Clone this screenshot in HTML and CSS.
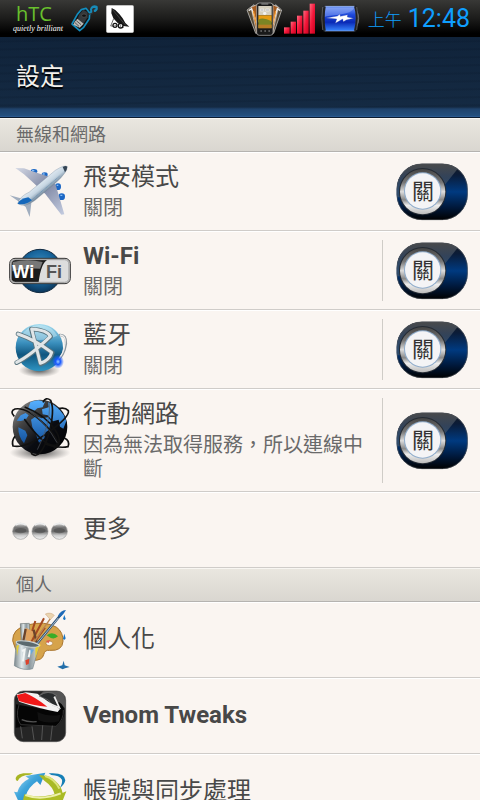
FILE: index.html
```html
<!DOCTYPE html>
<html lang="zh-Hant">
<head>
<meta charset="utf-8">
<meta name="viewport" content="width=device-width, initial-scale=1">
<title>設定</title>
<link rel="stylesheet" href="styles.css">
</head>
<body>
<svg class="defs" aria-hidden="true">
  <defs>
    <linearGradient id="track" x1="0" y1="0" x2="0" y2="1"><stop offset="0" stop-color="#1a1d22"/><stop offset=".2" stop-color="#0b1c38"/><stop offset=".5" stop-color="#003a80"/><stop offset=".78" stop-color="#00183a"/><stop offset="1" stop-color="#000"/></linearGradient>
    <linearGradient id="gloss" x1="0" y1="0" x2="0" y2="1"><stop offset="0" stop-color="#555"/><stop offset=".4" stop-color="#3d4c60"/><stop offset="1" stop-color="#33506f"/></linearGradient>
    <linearGradient id="chrome" x1="0" y1="0" x2="0" y2="1"><stop offset="0" stop-color="#444"/><stop offset=".3" stop-color="#777"/><stop offset=".5" stop-color="#ddd"/><stop offset=".68" stop-color="#888"/><stop offset=".8" stop-color="#eee"/><stop offset="1" stop-color="#bbb"/></linearGradient>
    <clipPath id="pill"><rect x="80" y="39" width="213" height="169" rx="76"/></clipPath>
    <symbol id="switch" viewBox="78 37 216 174">
      <rect x="80" y="39" width="213" height="169" rx="76" fill="url(#track)"/>
      <path clip-path="url(#pill)" d="M80 39H275L195 140H80Z" fill="url(#gloss)" opacity=".8"/>
      <rect x="81" y="40" width="211" height="167" rx="75" fill="none" stroke="#4a5058" stroke-width="2"/>
      <circle cx="158" cy="123" r="71" fill="#252b33"/>
      <circle cx="158" cy="123" r="68" fill="url(#chrome)"/>
      <circle cx="158" cy="121" r="56" fill="#8faccb"/>
      <circle cx="158" cy="121" r="53" fill="#f4f4f6"/>
    </symbol>
    <linearGradient id="body" x1="0" y1="0" x2="1" y2="1"><stop offset=".35" stop-color="#f5f9fc"/><stop offset=".52" stop-color="#c5d5e2"/><stop offset=".65" stop-color="#4d6379"/></linearGradient>
    <linearGradient id="wing" x1="0" y1="0" x2="1" y2="1"><stop offset="0" stop-color="#d5d9e5"/><stop offset=".5" stop-color="#7f88a4"/><stop offset="1" stop-color="#c4cce0"/></linearGradient>
    <radialGradient id="blue" cx=".5" cy=".4" r=".6"><stop offset="0" stop-color="#4196c6"/><stop offset=".6" stop-color="#17649b"/><stop offset="1" stop-color="#0c3558"/></radialGradient>
    <linearGradient id="bt" x1="0" y1="0" x2="0" y2="1"><stop offset="0" stop-color="#a5ddf0"/><stop offset=".4" stop-color="#3a8fbd"/><stop offset=".65" stop-color="#10567f"/><stop offset="1" stop-color="#2f96c4"/></linearGradient>
    <radialGradient id="shade"><stop offset="0" stop-color="#333" stop-opacity=".85"/><stop offset="1" stop-color="#555" stop-opacity="0"/></radialGradient>
    <radialGradient id="spark"><stop offset="0" stop-color="#9cf"/><stop offset=".4" stop-color="#1557ff"/><stop offset="1" stop-color="#1557ff" stop-opacity="0"/></radialGradient>
    <linearGradient id="globe" x1="0" y1="0" x2="1" y2="1"><stop offset="0" stop-color="#aaa"/><stop offset=".3" stop-color="#444"/><stop offset=".6" stop-color="#0a0c12"/><stop offset="1" stop-color="#000"/></linearGradient>
    <linearGradient id="land" x1="0" y1="0" x2="0" y2="1"><stop offset="0" stop-color="#56b0ff"/><stop offset="1" stop-color="#14539f"/></linearGradient>
    <linearGradient id="bead" x1="0" y1="0" x2="0" y2="1"><stop offset="0" stop-color="#ddd"/><stop offset=".25" stop-color="#777"/><stop offset=".5" stop-color="#6c6c6c"/><stop offset=".75" stop-color="#ccc"/><stop offset="1" stop-color="#f5f5f5"/></linearGradient>
    <linearGradient id="metal" x1="0" y1="0" x2="1" y2="0"><stop offset="0" stop-color="#7e898e"/><stop offset=".3" stop-color="#dfe7e9"/><stop offset=".6" stop-color="#89969c"/><stop offset="1" stop-color="#d9dfe0"/></linearGradient>
    <linearGradient id="syncblue" x1="0" y1="0" x2="1" y2="1"><stop offset="0" stop-color="#bfe8fa"/><stop offset=".4" stop-color="#3fa5db"/><stop offset="1" stop-color="#0a6fb5"/></linearGradient>
    <linearGradient id="cell" x1="0" y1="0" x2="0" y2="1"><stop offset="0" stop-color="#7fa2f5"/><stop offset=".35" stop-color="#1d48dc"/><stop offset=".65" stop-color="#0929b5"/><stop offset="1" stop-color="#3987ff"/></linearGradient>
    <linearGradient id="bars" x1="0" y1="0" x2="1" y2="1"><stop offset="0" stop-color="#ff6a80"/><stop offset=".5" stop-color="#f3173a"/><stop offset="1" stop-color="#c8001e"/></linearGradient>
  </defs>
</svg>
<div class="screen">
  <div class="status">
    <div class="brand"><span class="brand-name">h<span class="brand-caps">TC</span></span><span class="brand-tag">quietly brilliant</span></div>
    <svg class="usb" viewBox="210 15 87 87" aria-hidden="true">
      <path d="M262 44Q278 44 274 31Q277 20 289 24Q291 31 285 35" fill="none" stroke="#178bb8" stroke-width="8" stroke-linecap="round"/>
      <path d="M216 75L232 46L244 32L258 28L269 42L268 59L250 86L239 95Z" fill="#111" stroke="#138cbd" stroke-width="5" stroke-linejoin="round"/>
      <path d="M237 47L250 32L263 40L263 55L249 76L232 63Z" fill="#34383b"/>
      <path d="M224 68L232 59L251 74L239 86L220 77Z" fill="#b9b9b5"/><path d="M229 65L243 77M225 71L237 82" stroke="#555" stroke-width="3"/>
      <ellipse cx="252" cy="50" rx="7" ry="5" fill="#111" stroke="#555" stroke-width="2"/>
      <path d="M265 45Q282 47 278 31Q283 27 286 30" fill="none" stroke="#333" stroke-width="4"/>
    </svg>
    <svg class="dish" viewBox="114 9 84 84" aria-hidden="true">
      <rect x="115" y="10" width="82" height="82" rx="5" fill="#fff" stroke="#bbb" stroke-width="2"/>
      <path d="M131 18L142 24L154 36L164 49L172 63L184 74L166 72L149 63L136 49L130 34Z" fill="#161616"/>
      <path d="M134 23L173 70" stroke="#555" stroke-width="2"/>
      <path d="M137 50L128 72H136M151 61L166 77" stroke="#222" stroke-width="2" fill="none"/>
      <circle cx="141" cy="70" r="6" fill="#fff" stroke="#111" stroke-width="4"/><circle cx="158" cy="71" r="7" fill="#fff" stroke="#111" stroke-width="4"/>
      <path d="M139 70H145M158 67V75" stroke="#444" stroke-width="2"/>
    </svg>
    <span class="spacer"></span>
    <svg class="phones" viewBox="21 8 111 102" aria-hidden="true">
      <g stroke="#ddd" stroke-width="2" stroke-linejoin="round"><path d="M24 32L45 16L75 96L50 102Z" fill="#554a38"/><path d="M128 32L110 16L78 96L104 102Z" fill="#554a38"/><path d="M36 24L60 13L78 96L54 104Z" fill="#a35b20"/><path d="M118 24L95 13L77 96L100 104Z" fill="#a35b20"/></g>
      <path d="M29 34L38 28L54 75M124 34L115 28L102 75" fill="none" stroke="#eee" stroke-width="4"/>
      <path d="M43 35L55 87M110 35L99 87" stroke="#f19b35" stroke-width="4"/>
      <rect x="53" y="11" width="49" height="97" rx="8" fill="#191919" stroke="#bbb" stroke-width="2"/>
      <path d="M58 20H98V48H58Z" fill="#d5cfbe"/><path d="M58 48H98V69H58Z" fill="#e69c13"/><path d="M58 61Q72 52 98 66V86H58Z" fill="#7b8424"/><path d="M58 76H98V87H58Z" fill="#b77c25"/>
      <path d="M64 28H75V36H64ZM80 28H91V36H80Z" fill="#fff"/><path d="M65 32H74M81 32H90" stroke="#777" stroke-width="2"/><circle cx="77" cy="42" r="5" fill="#f2f2f2"/><path d="M67 14H88M64 95H69M76 95H81M88 95H93" stroke="#999" stroke-width="3"/>
    </svg>
    <svg class="signal" viewBox="135 13 96 93" aria-hidden="true"><g fill="url(#bars)"><path d="M135 86h17v19h-17z"/><path d="M155 69h16v36h-16z"/><path d="M174 51h16v54h-16z"/><path d="M193 36h16v69h-16z"/><path d="M212 15h16v90h-16z"/></g></svg>
    <svg class="battery" viewBox="246 16 117 81" aria-hidden="true">
      <path d="M350 29Q362 44 358 68L350 86Z" fill="#444" stroke="#888" stroke-width="2"/>
      <rect x="253" y="19" width="97" height="75" rx="6" fill="url(#cell)"/>
      <path d="M258 25H345Q340 40 300 45Q268 47 256 52Z" fill="#9eb6f8" opacity=".45"/>
      <path d="M257 18Q250 55 257 95M348 18Q360 54 348 95" fill="none" stroke="#222" stroke-width="7"/>
      <path d="M251 22Q246 55 251 91M353 22Q362 55 353 91" fill="none" stroke="#777" stroke-width="2"/>
      <path d="M257 20H347M257 94H347" stroke="#8fa7d8" stroke-width="2"/>
      <path d="M261 55L295 49L303 43L304 50L326 45L325 52L344 56L322 61L313 66L311 58L289 71L293 58Z" fill="#fff" stroke="#1d3bb0" stroke-width="1"/>
    </svg>
    <span class="ampm">上午</span><time class="clock">12:48</time>
  </div>
  <header class="bar"><h1>設定</h1></header>
  <main class="list">
    <h2>無線和網路</h2>
    <ul>
      <li class="row">
        <a class="entry" href="#airplane">
          <svg class="icon" viewBox="0 0 192 192" aria-hidden="true">
            <g fill="#1c67c5"><ellipse cx="78" cy="34" rx="10" ry="7"/><ellipse cx="110" cy="44" rx="9" ry="7"/><ellipse cx="150" cy="80" rx="9" ry="10"/><ellipse cx="161" cy="110" rx="10" ry="10"/></g>
            <path d="M72 32h7M104 42h6M146 76h5M157 106h6" stroke="#84bdf5" stroke-width="4"/>
            <path d="M22 24L48 25L82 37L128 52L144 78L154 112L169 163L160 164L112 102L76 68L48 43Z" fill="url(#wing)"/>
            <path d="M5 106L38 115L54 122L70 130L65 171L53 141L31 124Z" fill="#a1aebf"/>
            <path d="M29 131Q34 110 64 96L142 31Q170 13 178 20Q178 36 145 67L81 121Q51 144 29 131Z" fill="url(#body)" stroke="#6d8398" stroke-width="1"/>
            <path d="M29 131Q34 117 61 112L72 121Q50 138 29 131Z" fill="#1467bb"/>
            <path d="M65 125L154 49" stroke="#4c80ad" stroke-width="2" stroke-dasharray="3 2"/>
            <path d="M164 21Q173 16 178 20Q177 30 171 37Z" fill="#354453"/>
          </svg>
          <span class="text"><span class="title">飛安模式</span><span class="sub">關閉</span></span>
        </a>
        <button class="toggle" type="button" role="switch" aria-checked="false" aria-label="飛安模式 關"><svg aria-hidden="true"><use href="#switch"/></svg><span>關</span></button>
      </li>
      <li class="row split">
        <a class="entry" href="#wifi">
          <svg class="icon" viewBox="24 21 192 192" aria-hidden="true">
            <circle cx="120" cy="117" r="65" fill="url(#blue)" stroke="#122b42" stroke-width="3"/>
            <rect x="29" y="79" width="182" height="76" rx="16" fill="#ddd" stroke="#333" stroke-width="3"/>
            <path d="M46 84H141Q123 95 116 150H46Q34 150 34 138V98Q34 84 46 84Z" fill="#1c1c1c"/>
            <path d="M38 90Q82 80 128 90L120 110Q74 107 37 118Z" fill="#777"/>
            <rect x="33" y="83" width="174" height="68" rx="13" fill="none" stroke="#999" stroke-width="3"/>
            <text x="37" y="138" class="wifi-word" fill="#fff">Wi</text><text x="138" y="138" class="wifi-word" fill="#555">Fi</text>
          </svg>
          <span class="text"><span class="title">Wi-Fi</span><span class="sub">關閉</span></span>
        </a>
        <button class="toggle" type="button" role="switch" aria-checked="false" aria-label="Wi-Fi 關"><svg aria-hidden="true"><use href="#switch"/></svg><span>關</span></button>
      </li>
      <li class="row split">
        <a class="entry" href="#bluetooth">
          <svg class="icon" viewBox="24 258 192 192" aria-hidden="true">
            <ellipse cx="118" cy="415" rx="62" ry="21" fill="url(#shade)"/>
            <circle cx="118" cy="347" r="71" fill="url(#bt)"/>
            <path d="M64 312Q79 282 118 279Q157 281 172 311Q120 336 64 312Z" fill="#dff5fb" opacity=".4"/>
            <g fill="none" stroke-linecap="round" stroke-linejoin="round"><path d="M50 392Q91 373 152 314Q143 295 94 291L122 396Q151 385 157 362Q104 323 54 306" stroke="#58747f" stroke-width="14"/><path d="M50 391Q91 371 151 313Q142 294 95 291L121 394Q149 384 155 361Q104 323 54 306" stroke="#e0e5e7" stroke-width="9"/><path d="M180 309Q199 308 198 335Q193 371 167 393" stroke="#8c979f" stroke-width="7"/><path d="M181 309Q199 312 195 335Q192 366 171 386" stroke="#eee" stroke-width="4"/></g>
            <ellipse cx="174" cy="389" rx="18" ry="21" fill="url(#spark)"/>
          </svg>
          <span class="text"><span class="title">藍牙</span><span class="sub">關閉</span></span>
        </a>
        <button class="toggle" type="button" role="switch" aria-checked="false" aria-label="藍牙 關"><svg aria-hidden="true"><use href="#switch"/></svg><span>關</span></button>
      </li>
      <li class="row split">
        <a class="entry" href="#mobile">
          <svg class="icon" viewBox="24 36 192 192" aria-hidden="true">
            <ellipse cx="120" cy="203" rx="91" ry="24" fill="url(#shade)"/>
            <circle cx="120" cy="126" r="82" fill="url(#globe)"/>
            <path d="M91 52Q101 47 115 46L135 50L128 67L112 70L100 80L84 72ZM50 107L62 91L77 84L86 91L77 104L62 108ZM93 104L108 94L125 100L144 97L156 111L151 132L137 142L133 160L117 173L109 151L97 127ZM145 52Q185 67 199 108L190 131L180 125L176 104L159 109L143 91L128 88L126 73L146 67ZM55 127L76 137L82 151L72 175Q54 154 55 127Z" fill="url(#land)"/>
            <g fill="none" stroke="#111" stroke-width="5"><path d="M43 94Q28 79 45 72Q80 65 137 121Q192 181 161 181Q130 182 73 102"/><path d="M129 52Q137 34 152 46Q166 77 145 151Q121 226 96 207Q93 202 93 198"/><path d="M45 154Q34 168 39 183Q75 191 140 146Q211 94 205 77Q195 66 176 71"/><path d="M74 66Q138 91 167 137Q191 175 161 190M192 159Q211 166 204 185Q178 191 135 177"/></g>
            <path d="M91 82Q137 111 171 173M149 54Q151 120 112 194" fill="none" stroke="#52565d" stroke-width="2"/>
          </svg>
          <span class="text"><span class="title">行動網路</span><span class="sub">因為無法取得服務，所以連線中斷</span></span>
        </a>
        <button class="toggle" type="button" role="switch" aria-checked="false" aria-label="行動網路 關"><svg aria-hidden="true"><use href="#switch"/></svg><span>關</span></button>
      </li>
      <li class="row single">
        <a class="entry" href="#more">
          <svg class="icon" viewBox="24 9 192 192" aria-hidden="true"><g fill="url(#bead)" stroke="#999" stroke-width="2"><circle cx="62" cy="109" r="24"/><circle cx="120" cy="109" r="24"/><circle cx="178" cy="109" r="24"/></g><g fill="#484848" opacity=".55"><ellipse cx="62" cy="107" rx="17" ry="8"/><ellipse cx="120" cy="107" rx="17" ry="8"/><ellipse cx="178" cy="107" rx="17" ry="8"/></g><path d="M46 90Q62 80 78 90M104 90Q120 80 136 90M162 90Q178 80 194 90" stroke="#eee" stroke-width="5" fill="none"/></svg>
          <span class="text"><span class="title">更多</span></span>
        </a>
      </li>
    </ul>
    <h2>個人</h2>
    <ul>
      <li class="row single">
        <a class="entry" href="#personalize">
          <svg class="icon" viewBox="24 24 192 192" aria-hidden="true">
            <path d="M38 122Q37 86 82 75Q135 61 170 82Q190 97 189 124Q187 154 149 151Q134 149 131 164Q127 182 99 181Q51 179 38 122Z" fill="#d6a34b" stroke="#a9742d" stroke-width="3"/>
            <path d="M140 106Q158 92 174 109Q160 123 140 106Z" fill="#39ad27"/><ellipse cx="148" cy="130" rx="10" ry="7" fill="#faf5f1" stroke="#a9742d" stroke-width="2"/><path d="M104 127L123 135L107 151Z" fill="#ffda2b"/><path d="M137 123L151 120L145 130Z" fill="#dd5a4a"/>
            <path d="M61 71L88 70L90 123H64Z" fill="url(#metal)" stroke="#6e7777" stroke-width="2"/>
            <path d="M86 126L106 63M94 126L132 55M101 130L135 83" stroke="#a54921" stroke-width="6"/><path d="M77 83L101 95L91 126L76 121Z" fill="#e0a25f"/><path d="M70 122L77 87M101 89L110 129" stroke="#6b442b" stroke-width="7"/>
            <path d="M98 132L151 56" stroke="#b98452" stroke-width="4"/><path d="M136 42Q151 35 163 46L151 59Z" fill="#ead4b0" stroke="#b98452" stroke-width="1"/>
            <path d="M103 141L184 42" stroke="#285079" stroke-width="7"/><path d="M112 130L175 54" stroke="#b3c2cd" stroke-width="3"/><path d="M174 47Q181 32 198 30Q191 43 181 51Z" fill="#1d6ab8"/>
            <path d="M193 45L189 56Q194 64 197 56ZM193 101L189 116Q194 123 197 115Z" fill="#1975c4"/><path d="M172 200L187 196L191 182L194 196L209 201L195 205L188 208Z" fill="#226ea9"/>
            <path d="M49 124L117 139L98 206Q72 214 43 197Z" fill="url(#metal)" stroke="#76858c" stroke-width="2"/><ellipse cx="83" cy="132" rx="35" ry="8" transform="rotate(9 83 132)" fill="#5a696e" stroke="#ced8da" stroke-width="3"/>
            <path d="M49 137L57 135L51 168ZM106 143L118 139L106 174Z" fill="#e6ce31"/><path d="M76 181L88 176L86 192L78 195Z" fill="#db432d"/><path d="M66 153L74 149L69 184M91 150L86 172" stroke="#f4f6f5" stroke-width="6" fill="none"/><path d="M91 147L102 149L92 165Z" fill="#69a8d9"/>
          </svg>
          <span class="text"><span class="title">個人化</span></span>
        </a>
      </li>
      <li class="row single">
        <a class="entry" href="#venom">
          <svg class="icon" viewBox="24 27 192 192" aria-hidden="true">
            <rect x="43" y="48" width="154" height="152" rx="27" fill="#252525" stroke="#555" stroke-width="2"/>
            <path d="M131 49H174Q195 50 195 77V99L160 78L118 60Z" fill="#555"/>
            <path d="M48 88Q74 93 122 101L178 82Q195 92 193 117Q187 141 168 154Q104 149 47 158Z" fill="#050505"/>
            <path d="M50 58L78 52L112 56L142 78L180 102L173 111Q120 101 57 80Z" fill="#f2f2f2"/>
            <path d="M51 60L76 54Q105 66 142 95Q99 92 57 78Z" fill="#f01818"/>
            <path d="M117 63Q145 42 170 62L161 67L178 97L158 91L145 75Z" fill="#282b2d" stroke="#777" stroke-width="2"/>
            <path d="M163 65L178 98L150 86" fill="none" stroke="#eee" stroke-width="5"/>
            <path d="M57 90Q45 125 62 149L168 154Q192 134 190 105" fill="none" stroke="#333" stroke-width="3"/>
            <path d="M96 154L102 195M128 151L125 195M157 152L152 196M62 154L67 190" stroke="#555" stroke-width="3"/><path d="M112 111Q148 127 181 119L177 139Q146 148 115 136Z" fill="#111"/><path d="M65 134Q83 142 110 140" stroke="#555" stroke-width="4" fill="none"/>
          </svg>
          <span class="text"><span class="title">Venom Tweaks</span></span>
        </a>
      </li>
      <li class="row single">
        <a class="entry" href="#accounts">
          <svg class="icon" viewBox="24 255 192 192" aria-hidden="true">
            <path d="M48 316Q43 299 70 295L99 295L90 299Q60 300 53 318Z" fill="#a8b523"/>
            <path d="M146 295Q195 291 196 316Q194 329 179 340Q188 324 186 314Q178 301 154 300Z" fill="#167fb6"/>
            <path d="M76 303L136 293L121 330L111 319Q84 337 77 364L91 366L63 395L42 350L52 352Q59 324 87 311Z" fill="url(#syncblue)"/>
            <path d="M117 301Q149 299 167 319Q187 338 187 354L199 349L182 392L151 364L165 362Q160 335 133 317Z" fill="#a9ba24"/><path d="M135 303Q164 311 178 341" fill="none" stroke="#dce37c" stroke-width="6"/>
            <path d="M73 358Q121 374 188 350L170 395Q105 410 66 388Z" fill="#aebd24"/><path d="M76 360Q123 378 182 355" fill="none" stroke="#edf0a9" stroke-width="6"/>
          </svg>
          <span class="text"><span class="title">帳號與同步處理</span></span>
        </a>
      </li>
    </ul>
  </main>
</div>
</body>
</html>
```
FILE: styles.css
```css
* { box-sizing: border-box; }

body {
  margin: 0;
  background: #faf5f1;
  color: #444;
  font-family: Roboto, "Noto Sans CJK TC", sans-serif;
  font-weight: 400;
}

.defs { position: absolute; width: 0; height: 0; }

.screen {
  display: flex;
  flex-direction: column;
  height: 100vh;
  overflow: hidden;
}

.status {
  display: flex;
  align-items: center;
  flex: none;
  height: 37px;
  padding: 0 10px 0 13px;
  background: linear-gradient(#383836, #1c1c1b 50%, #000 90%);
  color: #0f9fff;
}

.status svg { flex: none; }
.spacer { flex: 1; }

.brand {
  display: flex;
  flex-direction: column;
  width: 50px;
  margin-right: 7px;
}

.brand-name {
  padding-left: 3px;
  color: #69c02d;
  font: 400 20px/20px "Open Sans", sans-serif;
  white-space: nowrap;
}

.brand-caps { font-size: 20px; }

.brand-tag {
  color: #fff;
  font: italic 400 8px/10px "Liberation Serif", serif;
  white-space: nowrap;
}

.usb { width: 29px; height: 29px; margin-right: 7px; }
.dish { width: 28px; height: 28px; }
.phones { width: 37px; height: 34px; margin-right: 1px; }
.signal { width: 32px; height: 31px; margin-right: 5px; }
.battery { width: 39px; height: 27px; margin-right: 8px; }
.ampm { margin-right: 6px; font-size: 17px; font-weight: 300; }
.clock { font-size: 25px; }

.bar {
  flex: none;
  height: 81px;
  padding: 22px 16px;
  border-bottom: 1px solid #0c1c30;
  background:
    linear-gradient(transparent 70px, #1f426b 72px, #24507f 79px, #3263a0 80px),
    repeating-linear-gradient(179deg, transparent 0 3px, rgba(0, 8, 20, 0.1) 4px 5px, transparent 6px 8px),
    linear-gradient(#10233a, #152b44);
}

h1 {
  margin: 0;
  color: #f4f1ec;
  font-size: 24px;
  font-weight: 400;
  line-height: 36px;
  text-shadow: 0 2px 1px #000;
}

.list { flex: 1; min-height: 0; overflow: hidden; }

h2 {
  margin: 0;
  height: 34px;
  padding-left: 16px;
  border-top: 1px solid #f8f6f2;
  border-bottom: 1px solid #b5b3b0;
  background: linear-gradient(#e9e6df, #d9d6d0);
  color: #6a6a6a;
  font-size: 18px;
  font-weight: 400;
  line-height: 32px;
}

ul { margin: 0; padding: 0; list-style: none; }

.row {
  display: flex;
  align-items: center;
  padding-right: 12px;
  border-top: 1px solid #fff;
  border-bottom: 1px solid #cfccc9;
}

.entry {
  display: flex;
  flex: 1;
  gap: 11px;
  padding: 7px 13px 6px 8px;
  color: inherit;
  text-decoration: none;
}

.icon { flex: none; width: 64px; height: 64px; }
.text { display: flex; flex-direction: column; gap: 4px; padding: 2px 0 4px; }
.title { color: #484848; font-size: 24px; line-height: 30px; }
.sub { color: #6a6a6a; font-size: 20px; line-height: 24px; }

.single .entry { align-items: center; padding: 5px 8px; }
.single .text { padding: 0 0 2px; }

a[href="#wifi"] .title,
a[href="#venom"] .title { font-weight: 700; }

.wifi-word { font: 700 54px "Liberation Sans", sans-serif; }

.toggle {
  display: grid;
  place-items: center;
  flex: none;
  width: 72px;
  height: 58px;
  margin-left: 13px;
  padding: 0;
  border: 0;
  background: none;
  color: #333;
  font: 400 22px/28px "Noto Sans CJK TC", sans-serif;
}

.toggle svg, .toggle span { grid-area: 1 / 1; }
.toggle svg { width: 72px; height: 58px; }
.toggle span { width: 54px; justify-self: start; padding-bottom: 6px; }

.split .entry { position: relative; }
.split .entry::after {
  content: "";
  position: absolute;
  top: 8px;
  right: 0;
  bottom: 8px;
  width: 1px;
  background: #cfccc7;
}
```
